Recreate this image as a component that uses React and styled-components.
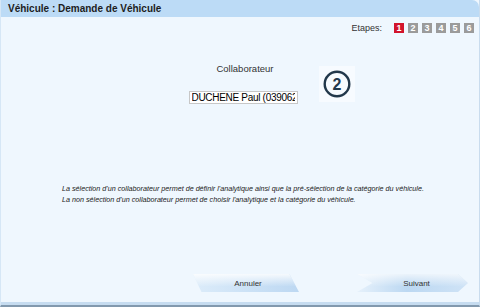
import { createGlobalStyle, styled } from "styled-components";

const GlobalStyle = createGlobalStyle`
  html, body {
    margin: 0;
    padding: 0;
    background: #eff7fe;
  }
  body {
    font-family: "Liberation Sans", Arial, sans-serif;
  }
`;

const Window = styled.div`
  position: relative;
  width: 480px;
  height: 307px;
  box-sizing: border-box;
  display: flex;
  flex-direction: column;
  background: #eff7fe;
  border-left: 1px solid #d6e7f6;
  border-right: 1px solid #c9dcee;
  border-bottom: 2px solid #8299ae;
  box-shadow: inset 0 -3px 0 #c6dcf0;
  overflow: hidden;
`;

const TitleBar = styled.div`
  height: 17px;
  flex: none;
  display: flex;
  align-items: center;
  padding-left: 7px;
  background: #bcdbf6;
  border-top-right-radius: 7px;
  font-size: 10px;
  font-weight: bold;
  color: #1d1d1d;
`;

const StepsRow = styled.div`
  display: flex;
  justify-content: flex-end;
  align-items: center;
  margin-top: 6px;
  padding-right: 5px;
  height: 10px;
  font-size: 9px;
  color: #333;
`;

const StepsLabel = styled.span`
  margin-right: 12px;
`;

const StepList = styled.div`
  display: flex;
  gap: 4px;
`;

const Step = styled.span`
  width: 10px;
  height: 10px;
  display: flex;
  align-items: center;
  justify-content: center;
  font-size: 9px;
  font-weight: bold;
  color: #fff;
  background: ${(props) => (props.$active ? "#d2142c" : "#9b9b9b")};
`;

const Field = styled.div`
  display: flex;
  flex-direction: column;
  align-items: center;
  margin-top: 30px;
  padding-left: 6px;
`;

const FieldLabel = styled.div`
  font-size: 9.5px;
  color: #333;
  height: 11px;
  margin-left: 4px;
`;

const Input = styled.input`
  margin-top: 17px;
  width: 109px;
  height: 13px;
  box-sizing: border-box;
  padding: 0 2px;
  border: 1px solid #c7c7c7;
  background: #fff;
  font-family: "Liberation Sans", Arial, sans-serif;
  font-size: 10px;
  letter-spacing: -0.3px;
  color: #000;
  outline: none;
`;

const Marker = styled.div`
  position: absolute;
  left: 318px;
  top: 66px;
  width: 36px;
  height: 36px;
  background: #f7fbff;
  display: flex;
  align-items: center;
  justify-content: center;
`;

const Note = styled.div`
  margin-top: 79px;
  padding-left: 61px;
  font-size: 7.2px;
  line-height: 11px;
  font-style: italic;
  color: #222;
`;

const Actions = styled.div`
  margin-top: auto;
  margin-bottom: 13px;
  display: flex;
  justify-content: flex-end;
  align-items: center;
  gap: 58px;
  padding-right: 11px;
`;

const shapes = {
  back: "polygon(0 0, 91% 0, 100% 100%, 8% 100%)",
  next: "polygon(0 0, 91% 0, 100% 50%, 91% 100%, 0 100%, 14% 50%)",
};

const backgrounds = {
  back: "linear-gradient(to bottom, rgba(255,255,255,0.85), rgba(255,255,255,0) 70%), linear-gradient(to right, #dcecfa, #bdd8f2)",
  next: "linear-gradient(to bottom, rgba(255,255,255,0.7), rgba(255,255,255,0) 70%), linear-gradient(to right, #e6f1fb, #bcd8f2 45%, #cfe3f6)",
};

const ShapeButton = styled.button`
  width: ${(props) => (props.$shape === "next" ? "111px" : "106px")};
  height: 18px;
  border: none;
  padding: 0;
  padding-left: ${(props) => (props.$shape === "next" ? "8px" : "4px")};
  clip-path: ${(props) => shapes[props.$shape]};
  background: ${(props) => backgrounds[props.$shape]};
  font-family: "Liberation Sans", Arial, sans-serif;
  font-size: 8px;
  color: #333;
  cursor: pointer;
`;

const steps = [1, 2, 3, 4, 5, 6];

export default function App() {
  return (
    <>
      <GlobalStyle />
      <Window>
        <TitleBar>Véhicule : Demande de Véhicule</TitleBar>

        <StepsRow>
          <StepsLabel>Etapes:</StepsLabel>
          <StepList>
            {steps.map((n) => (
              <Step key={n} $active={n === 1}>
                {n}
              </Step>
            ))}
          </StepList>
        </StepsRow>

        <Field>
          <FieldLabel>Collaborateur</FieldLabel>
          <Input defaultValue="DUCHENE Paul (039062)" readOnly />
        </Field>

        <Marker>
          <svg width="28" height="28" viewBox="0 0 28 28">
            <circle cx="14" cy="14" r="12.3" fill="none" stroke="#22384b" strokeWidth="2.4" />
            <text
              x="14"
              y="19.6"
              textAnchor="middle"
              fontFamily="Liberation Sans, Arial, sans-serif"
              fontWeight="bold"
              fontSize="16"
              fill="#22384b"
            >
              2
            </text>
          </svg>
        </Marker>

        <Note>
          <div>
            La sélection d'un collaborateur permet de définir l'analytique ainsi que la pré-sélection de la catégorie du véhicule.
          </div>
          <div>La non sélection d'un collaborateur permet de choisir l'analytique et la catégorie du véhicule.</div>
        </Note>

        <Actions>
          <ShapeButton $shape="back">Annuler</ShapeButton>
          <ShapeButton $shape="next">Suivant</ShapeButton>
        </Actions>
      </Window>
    </>
  );
}
